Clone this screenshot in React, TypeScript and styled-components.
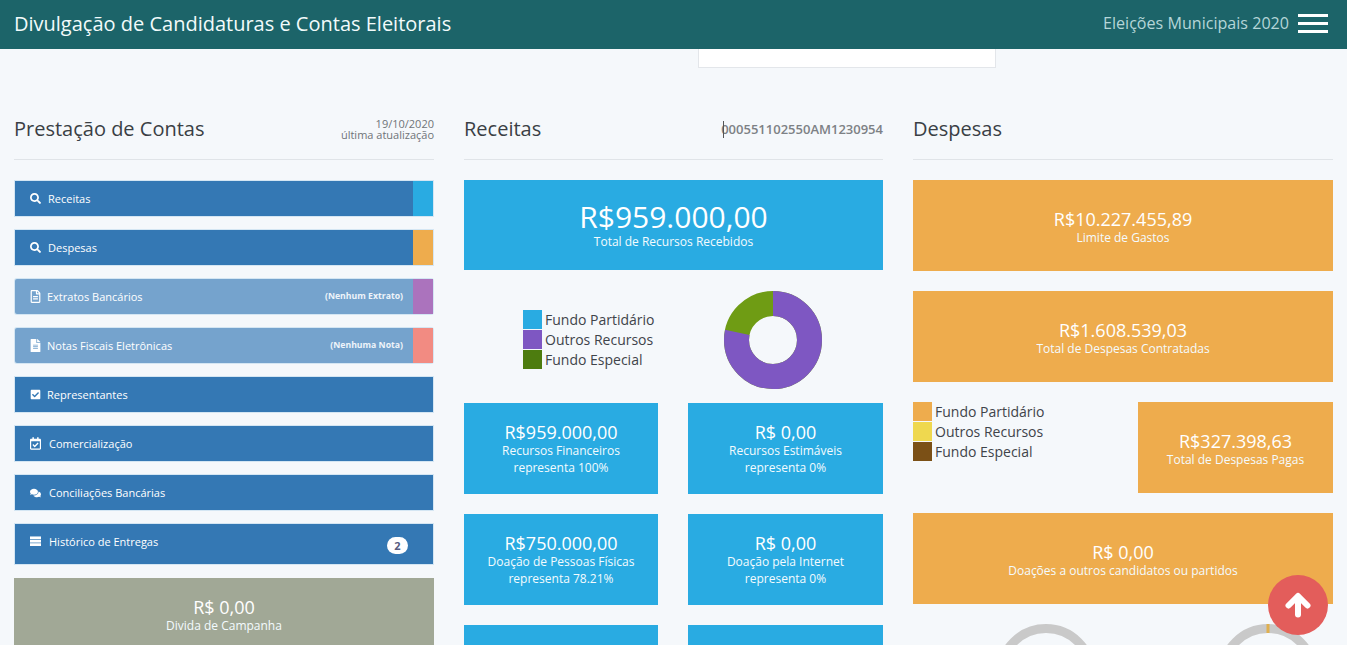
import React from "react";
import styled, { createGlobalStyle } from "styled-components";
import {
  FaSearch,
  FaRegFileAlt,
  FaFileAlt,
  FaCheckSquare,
  FaRegCalendarCheck,
  FaComments,
} from "react-icons/fa";

const Global = createGlobalStyle`
  html, body { margin: 0; padding: 0; height: 645px; overflow: hidden; background: #f5f8fb; }
  body { font-family: "Open Sans", "Liberation Sans", sans-serif; color: #3a3f45; }
  * { box-sizing: border-box; }
`;

const Page = styled.div`
  position: relative;
  height: 645px;
  overflow: hidden;
`;

const Header = styled.header`
  height: 49px;
  background: #1c6469;
  display: flex;
  align-items: center;
  justify-content: space-between;
  padding: 0 19px 3px 14px;
`;

const Brand = styled.div`
  font-size: 20px;
  color: #f2fbfb;
`;

const HeaderRight = styled.div`
  display: flex;
  align-items: center;
  gap: 9px;
`;

const Election = styled.span`
  font-size: 16.1px;
  color: #b5d6d8;
`;

const Burger = styled.div`
  width: 30px;
  margin-top: 1px;
  display: flex;
  flex-direction: column;
  gap: 5px;
  span {
    display: block;
    height: 3px;
    background: #fff;
  }
`;

const Dropdown = styled.div`
  position: absolute;
  top: 49px;
  left: 698px;
  width: 298px;
  height: 19px;
  background: #fff;
  border: 1px solid #e3e6ea;
  border-top: 0;
`;

const Columns = styled.main`
  display: grid;
  grid-template-columns: 420px 419px 420px;
  column-gap: 30px;
  padding: 50px 14px 0;
`;

const Column = styled.section`
  display: flex;
  flex-direction: column;
  min-width: 0;
`;

const ColumnHead = styled.div`
  height: 61px;
  border-bottom: 1px solid #e0e4e8;
  margin-bottom: 20px;
  display: flex;
  align-items: center;
  justify-content: space-between;
`;

const Title = styled.h2`
  margin: 0 0 2px;
  font-size: 20px;
  font-weight: 400;
  color: #3a3f45;
`;

const Stamp = styled.div`
  font-size: 11px;
  line-height: 11px;
  text-align: right;
  color: #6f7478;
`;

const Code = styled.div`
  position: relative;
  font-size: 13px;
  font-weight: 600;
  color: #7d8185;
  line-height: 17px;
  &::before {
    content: "";
    position: absolute;
    left: 1.5px;
    top: 0;
    bottom: 0;
    width: 1px;
    background: #555;
  }
`;

const Menu = styled.nav`
  display: flex;
  flex-direction: column;
  gap: 14px;
  margin-top: 1px;
`;

const Row = styled.a<{ $pale?: boolean; $tall?: boolean }>`
  display: flex;
  height: ${(p) => (p.$tall ? 40 : 35)}px;
  margin: 0 1px;
  background: ${(p) => (p.$pale ? "#75a3cd" : "#3478b4")};
  box-shadow: 0 0 0 1px #d4e6f3;
  border-radius: ${(p) => (p.$pale ? 2 : 0)}px;
  color: #fff;
  font-size: 11px;
`;

const RowBody = styled.div<{ $tall?: boolean }>`
  flex: 1;
  display: flex;
  align-items: ${(p) => (p.$tall ? "flex-start" : "center")};
  padding: ${(p) => (p.$tall ? "10px 10px 0 15px" : "0 10px 0 15px")};
  min-width: 0;
  position: relative;
`;

const RowIcon = styled.span<{ $gap: number; $size?: number }>`
  display: inline-flex;
  align-items: center;
  width: 11px;
  height: 15px;
  margin-right: ${(p) => p.$gap}px;
  font-size: ${(p) => p.$size ?? 11}px;
  justify-content: center;
`;

const RowLabel = styled.span`
  flex: 1;
`;

const RowNote = styled.span`
  font-size: 8.7px;
  font-weight: 700;
  color: #eef4fa;
  margin-top: -1px;
`;

const Stripe = styled.div<{ $color: string }>`
  width: 20px;
  background: ${(p) => p.$color};
`;

const Badge = styled.span`
  position: absolute;
  right: 25px;
  top: 13px;
  width: 21px;
  height: 17px;
  border-radius: 9px;
  background: #fff;
  color: #555a80;
  font-size: 11px;
  font-weight: 700;
  display: flex;
  align-items: center;
  justify-content: center;
`;

const Tile = styled.div<{ $color: string; $h?: number; $shift?: number }>`
  height: ${(p) => p.$h ?? 91}px;
  background: ${(p) => p.$color};
  color: #fff;
  display: flex;
  flex-direction: column;
  align-items: center;
  justify-content: center;
  text-align: center;
  padding-top: ${(p) => p.$shift ?? 1}px;
`;

const Value = styled.div<{ $big?: boolean }>`
  font-size: ${(p) => (p.$big ? 30 : 18)}px;
  line-height: ${(p) => (p.$big ? 32 : 21)}px;
  margin-bottom: ${(p) => (p.$big ? 0 : -1)}px;
`;

const Sub = styled.div`
  font-size: 12px;
  line-height: 17px;
  color: #f4fbfe;
`;

const DebtTile = styled(Tile)`
  margin-top: 14px;
  height: 120px;
  justify-content: flex-start;
  padding-top: 19px;
`;

const Stack = styled.div`
  display: flex;
  flex-direction: column;
  gap: 20px;
`;

const TwoUp = styled.div`
  display: grid;
  grid-template-columns: 194px 195px;
  column-gap: 30px;
`;

const ChartRow = styled.div`
  display: grid;
  grid-template-columns: 194px 195px;
  column-gap: 30px;
  height: 98px;
  margin: 1px 0 -6px;
  padding-bottom: 2px;
  align-items: center;
`;

const Legend = styled.ul<{ $left?: number }>`
  list-style: none;
  margin: 0;
  padding: 0 0 0 ${(p) => p.$left ?? 0}px;
  display: flex;
  flex-direction: column;
  gap: 1px;
`;

const LegendItem = styled.li`
  display: flex;
  align-items: center;
  gap: 3px;
  height: 19px;
  font-size: 14px;
  color: #3f444a;
`;

const Swatch = styled.span<{ $color: string }>`
  width: 19px;
  height: 19px;
  background: ${(p) => p.$color};
`;

const DonutBox = styled.div`
  display: flex;
  justify-content: center;
  padding-right: 26px;
  margin-bottom: -2px;
`;

const PaidRow = styled.div`
  display: grid;
  grid-template-columns: 195px 195px;
  column-gap: 30px;
`;

const GaugeRow = styled.div`
  display: flex;
  margin-top: 20px;
  padding-left: 83px;
  gap: 122px;
`;

const ScrollTop = styled.button`
  position: absolute;
  left: 1268px;
  top: 575px;
  width: 60px;
  height: 60px;
  border: 0;
  padding: 0;
  border-radius: 50%;
  background: #e35d5b;
  color: #fff;
  display: flex;
  align-items: center;
  justify-content: center;
`;

const Donut = () => {
  const r = 36.5;
  const c = 2 * Math.PI * r;
  const purple = 0.7821;
  return (
    <svg width="98" height="98" viewBox="0 0 98 98">
      <g transform="rotate(-90 49 49)" fill="none" strokeWidth="25">
        <circle cx="49" cy="49" r={r} stroke="#6f9c14" />
        <circle cx="49" cy="49" r={r} stroke="#7e57c2" strokeDasharray={`${c * purple} ${c}`} />
      </g>
    </svg>
  );
};

const Gauge = ({ tick }: { tick?: boolean }) => (
  <svg width="100" height="100" viewBox="0 0 100 100">
    <circle cx="50" cy="50" r="45.5" fill="none" stroke="#c9c9c9" strokeWidth="9" />
    {tick && <rect x="48.5" y="0" width="3" height="9" fill="#e0b04f" />}
  </svg>
);

const BarsIcon = () => (
  <svg width="12" height="11" viewBox="0 0 12 11" fill="currentColor">
    <rect y="0" width="12" height="3" />
    <rect y="3.7" width="12" height="3" />
    <rect y="7.4" width="12" height="3" />
  </svg>
);

const UpArrow = () => (
  <svg width="26" height="26" viewBox="0 0 26 26" fill="none" stroke="currentColor" strokeWidth="6" strokeLinecap="round" strokeLinejoin="round">
    <path d="M13 22.5V5" />
    <path d="M3.5 13.5L13 4l9.5 9.5" />
  </svg>
);

const partyLegend = (colors: string[], left?: number) => (
  <Legend $left={left}>
    {["Fundo Partidário", "Outros Recursos", "Fundo Especial"].map((t, i) => (
      <LegendItem key={t}>
        <Swatch $color={colors[i]} />
        {t}
      </LegendItem>
    ))}
  </Legend>
);

const BLUE = "#29abe2";
const ORANGE = "#eeac4d";

export default function App() {
  return (
    <Page>
      <Global />
      <Header>
        <Brand>Divulgação de Candidaturas e Contas Eleitorais</Brand>
        <HeaderRight>
          <Election>Eleições Municipais 2020</Election>
          <Burger>
            <span />
            <span />
            <span />
          </Burger>
        </HeaderRight>
      </Header>
      <Dropdown />
      <Columns>
        <Column>
          <ColumnHead>
            <Title>Prestação de Contas</Title>
            <Stamp>
              19/10/2020
              <br />
              última atualização
            </Stamp>
          </ColumnHead>
          <Menu>
            <Row>
              <RowBody>
                <RowIcon $gap={7}><FaSearch /></RowIcon>
                <RowLabel>Receitas</RowLabel>
              </RowBody>
              <Stripe $color="#29abe2" />
            </Row>
            <Row>
              <RowBody>
                <RowIcon $gap={7}><FaSearch /></RowIcon>
                <RowLabel>Despesas</RowLabel>
              </RowBody>
              <Stripe $color="#eeac4d" />
            </Row>
            <Row $pale>
              <RowBody>
                <RowIcon $gap={6} $size={13}><FaRegFileAlt /></RowIcon>
                <RowLabel>Extratos Bancários</RowLabel>
                <RowNote>(Nenhum Extrato)</RowNote>
              </RowBody>
              <Stripe $color="#ab73bd" />
            </Row>
            <Row $pale>
              <RowBody>
                <RowIcon $gap={6} $size={13}><FaFileAlt /></RowIcon>
                <RowLabel>Notas Fiscais Eletrônicas</RowLabel>
                <RowNote>(Nenhuma Nota)</RowNote>
              </RowBody>
              <Stripe $color="#f28b82" />
            </Row>
            <Row>
              <RowBody>
                <RowIcon $gap={6}><FaCheckSquare /></RowIcon>
                <RowLabel>Representantes</RowLabel>
              </RowBody>
            </Row>
            <Row>
              <RowBody>
                <RowIcon $gap={8} $size={13}><FaRegCalendarCheck /></RowIcon>
                <RowLabel>Comercialização</RowLabel>
              </RowBody>
            </Row>
            <Row>
              <RowBody>
                <RowIcon $gap={8} $size={12}><FaComments /></RowIcon>
                <RowLabel>Conciliações Bancárias</RowLabel>
              </RowBody>
            </Row>
            <Row $tall>
              <RowBody $tall>
                <RowIcon $gap={8}><BarsIcon /></RowIcon>
                <RowLabel>Histórico de Entregas</RowLabel>
                <Badge>2</Badge>
              </RowBody>
            </Row>
          </Menu>
          <DebtTile $color="#a1a896">
            <Value>R$ 0,00</Value>
            <Sub>Divida de Campanha</Sub>
          </DebtTile>
        </Column>

        <Column>
          <ColumnHead>
            <Title>Receitas</Title>
            <Code>000551102550AM1230954</Code>
          </ColumnHead>
          <Stack>
            <Tile $color={BLUE} $h={90}>
              <Value $big>R$959.000,00</Value>
              <Sub>Total de Recursos Recebidos</Sub>
            </Tile>
            <ChartRow>
              {partyLegend(["#29abe2", "#7e57c2", "#4d7c0f"], 59)}
              <DonutBox>
                <Donut />
              </DonutBox>
            </ChartRow>
            <TwoUp>
              <Tile $color={BLUE}>
                <Value>R$959.000,00</Value>
                <Sub>Recursos Financeiros<br />representa 100%</Sub>
              </Tile>
              <Tile $color={BLUE}>
                <Value>R$ 0,00</Value>
                <Sub>Recursos Estimáveis<br />representa 0%</Sub>
              </Tile>
            </TwoUp>
            <TwoUp>
              <Tile $color={BLUE}>
                <Value>R$750.000,00</Value>
                <Sub>Doação de Pessoas Físicas<br />representa 78.21%</Sub>
              </Tile>
              <Tile $color={BLUE}>
                <Value>R$ 0,00</Value>
                <Sub>Doação pela Internet<br />representa 0%</Sub>
              </Tile>
            </TwoUp>
            <TwoUp>
              <Tile $color={BLUE} />
              <Tile $color={BLUE} />
            </TwoUp>
          </Stack>
        </Column>

        <Column>
          <ColumnHead>
            <Title>Despesas</Title>
          </ColumnHead>
          <Stack>
            <Tile $color={ORANGE} $shift={4}>
              <Value>R$10.227.455,89</Value>
              <Sub>Limite de Gastos</Sub>
            </Tile>
            <Tile $color={ORANGE} $shift={4}>
              <Value>R$1.608.539,03</Value>
              <Sub>Total de Despesas Contratadas</Sub>
            </Tile>
            <PaidRow>
              {partyLegend(["#eeac4d", "#efd84f", "#7b5016"])}
              <Tile $color={ORANGE} $shift={4}>
                <Value>R$327.398,63</Value>
                <Sub>Total de Despesas Pagas</Sub>
              </Tile>
            </PaidRow>
            <Tile $color={ORANGE} $shift={4}>
              <Value>R$ 0,00</Value>
              <Sub>Doações a outros candidatos ou partidos</Sub>
            </Tile>
          </Stack>
          <GaugeRow>
            <Gauge />
            <Gauge tick />
          </GaugeRow>
        </Column>
      </Columns>
      <ScrollTop aria-label="Voltar ao topo">
        <UpArrow />
      </ScrollTop>
    </Page>
  );
}
